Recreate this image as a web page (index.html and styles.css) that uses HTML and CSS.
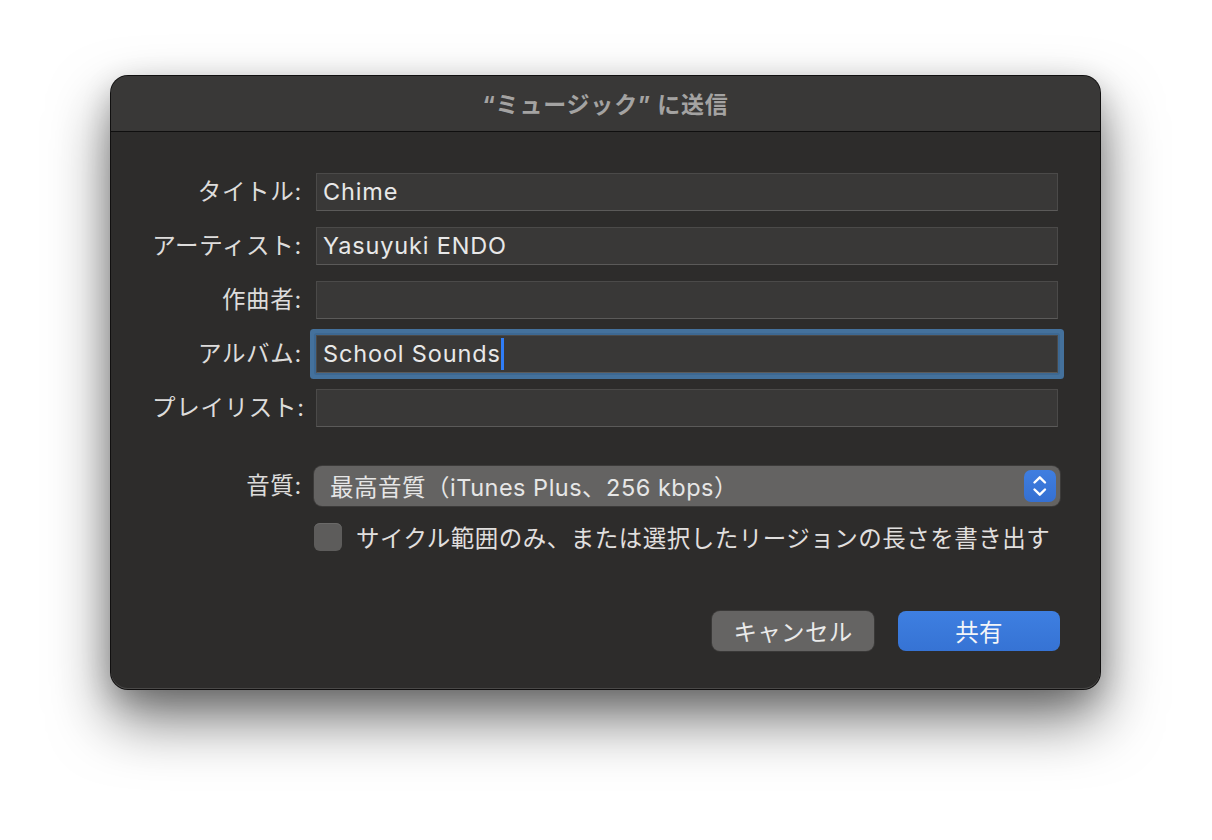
FILE: index.html
```html
<!DOCTYPE html>
<html lang="ja">
<head>
<meta charset="utf-8">
<title>“ミュージック” に送信</title>
<link rel="stylesheet" href="styles.css">
</head>
<body>
<div class="stage">
  <div class="window">
    <div class="titlebar">“ミュージック” に送信</div>
    <div class="content">
      <div class="form">
        <div class="label">タイトル:</div>
        <div class="field">Chime</div>
        <div class="label">アーティスト:</div>
        <div class="field">Yasuyuki ENDO</div>
        <div class="label">作曲者:</div>
        <div class="field"></div>
        <div class="label">アルバム:</div>
        <div class="field focused">School Sounds<span class="caret"></span></div>
        <div class="label">プレイリスト:</div>
        <div class="field"></div>
        <div class="label popup-label">音質:</div>
        <div class="popup">
          <span class="popup-text">最高音質（iTunes Plus、256 kbps）</span>
          <span class="stepper">
            <svg width="32" height="32" viewBox="0 0 32 32" fill="none" stroke="#ffffff" stroke-width="2.4" stroke-linecap="round" stroke-linejoin="round">
              <polyline points="10.5,12.5 15.8,7.3 21,12.5"/>
              <polyline points="10.5,19.5 15.8,24.7 21,19.5"/>
            </svg>
          </span>
        </div>
        <div class="spacer"></div>
        <div class="check-row">
          <span class="checkbox"></span>
          <span class="check-text">サイクル範囲のみ、または選択したリージョンの長さを書き出す</span>
        </div>
      </div>
      <div class="buttons">
        <div class="button cancel">キャンセル</div>
        <div class="button primary">共有</div>
      </div>
    </div>
  </div>
</div>
</body>
</html>
```
FILE: styles.css
```css
html, body {
  margin: 0;
  padding: 0;
  background: #ffffff;
}

body {
  font-family: "Inter", "Noto Sans CJK JP", sans-serif;
  width: 1212px;
  height: 840px;
  overflow: hidden;
}

.stage {
  display: flex;
  padding-top: 76px;
  padding-left: 111px;
}

.window {
  width: 989px;
  border-radius: 17px;
  background: #2d2c2b;
  box-shadow:
    0 0 0 1px #111010,
    inset 0 -1px 0 0 #4a4948,
    0 30px 60px rgba(0, 0, 0, 0.55),
    0 10px 30px rgba(0, 0, 0, 0.2);
  overflow: hidden;
}

.titlebar {
  height: 56px;
  background: #393837;
  border-bottom: 1px solid #0f0f0f;
  display: flex;
  align-items: center;
  justify-content: center;
  font-size: 23px;
  font-weight: 700;
  color: #a4a3a2;
  letter-spacing: 0.8px;
  padding-bottom: 2px;
  box-sizing: border-box;
}

.content {
  padding: 41px 42px 38px 41px;
}

.form {
  display: grid;
  grid-template-columns: 150px 742px;
  column-gap: 14px;
  row-gap: 16px;
  align-items: center;
}

.label {
  text-align: right;
  font-size: 23.5px;
  color: #dddcdb;
  white-space: nowrap;
  line-height: 38px;
  letter-spacing: 0.7px;
}

.field {
  position: relative;
  height: 38px;
  box-sizing: border-box;
  background: #393837;
  border: 1px solid #4b4a49;
  border-bottom-color: #5b5a59;
  padding-left: 6px;
  font-size: 23.5px;
  line-height: 36px;
  color: #e8e8e8;
  letter-spacing: 0.85px;
  display: flex;
  align-items: center;
}

.field.focused {
  box-shadow: 0 0 0 2px #3d6892, 0 0 0 6px #44719c;
  border-radius: 1px;
}

.caret {
  display: inline-block;
  width: 3px;
  height: 32px;
  background: #2f7df7;
  margin-left: 0;
}

.popup-label {
  margin-top: 23px;
}

.popup {
  margin-top: 23px;
  margin-left: -2px;
  width: 746px;
  height: 40px;
  box-sizing: border-box;
  background: #646362;
  border-radius: 8px;
  box-shadow: 0 0 0 1px #3c3b3a;
  display: flex;
  align-items: center;
  justify-content: space-between;
  padding: 0 4px 0 16px;
}

.popup-text {
  font-size: 23.5px;
  color: #e6e6e6;
  white-space: nowrap;
  letter-spacing: 0.5px;
}

.stepper {
  width: 32px;
  height: 32px;
  border-radius: 7px;
  background: linear-gradient(#3f7ee0, #3570d2);
  display: flex;
}

.spacer {
  height: 28px;
}

.check-row {
  margin-top: 1px;
  margin-left: -2px;
  display: flex;
  align-items: center;
  gap: 14px;
  height: 28px;
}

.checkbox {
  width: 28px;
  height: 28px;
  box-sizing: border-box;
  border-radius: 6px;
  background: #5d5c5b;
  box-shadow: inset 0 1px 0 #6a6968;
}

.check-text {
  font-size: 23.5px;
  color: #e0dfde;
  white-space: nowrap;
  letter-spacing: 0.5px;
}

.buttons {
  display: flex;
  justify-content: flex-end;
  gap: 24px;
  margin-top: 60px;
  margin-right: -2px;
}

.button {
  width: 162px;
  height: 40px;
  border-radius: 8px;
  display: flex;
  align-items: center;
  justify-content: center;
  font-size: 23.5px;
  color: #eaeaea;
  letter-spacing: 0.3px;
}

.button.cancel {
  background: #656463;
  box-shadow: 0 0 0 1px #3a3938;
}

.button.primary {
  background: linear-gradient(#3e7fe1, #3673d4);
  color: #f3f5f8;
}
```
